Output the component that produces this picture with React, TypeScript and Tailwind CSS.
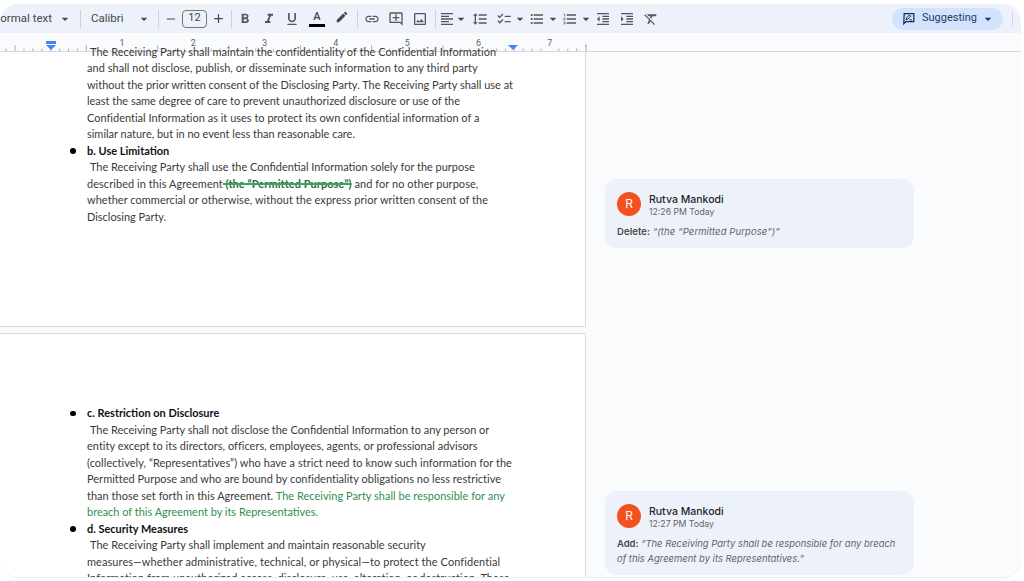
import React from 'react';
import {
  MdArrowDropDown,
  MdFormatBold,
  MdFormatItalic,
  MdFormatUnderlined,
  MdLink,
  MdOutlineAddComment,
  MdOutlineImage,
  MdFormatAlignLeft,
  MdFormatLineSpacing,
  MdChecklist,
  MdFormatListBulleted,
  MdFormatListNumbered,
  MdFormatIndentDecrease,
  MdFormatIndentIncrease,
  MdFormatClear,
  MdEdit,
  MdAdd,
  MdRemove,
} from 'react-icons/md';

const ICON = 'w-[16px] h-[16px] text-[#55585a]';

const Slot: React.FC<{ className: string; children?: React.ReactNode }> = ({ className, children }) => (
  <div className={`flex items-center justify-center shrink-0 h-full ${className}`}>{children}</div>
);

const Caret = () => <MdArrowDropDown className="w-[16px] h-[16px] text-[#444746] shrink-0" />;
const Sep = () => <div className="w-px h-[18px] bg-[#d0d3d6]" />;

const Toolbar = () => (
  <div className="flex items-center h-[29px] bg-[#edf2fa] font-['Roboto',sans-serif] text-[11.5px] text-[#444746] shrink-0">
    <Slot className="w-[58px] justify-end pr-[6px] overflow-hidden">
      <span className="whitespace-nowrap">Normal text</span>
    </Slot>
    <Slot className="w-[14px]"><Caret /></Slot>
    <Slot className="w-[16px]"><Sep /></Slot>
    <Slot className="w-[49px] justify-start pl-[3px]"><span>Calibri</span></Slot>
    <Slot className="w-[14px]"><Caret /></Slot>
    <Slot className="w-[14px]"><Sep /></Slot>
    <Slot className="w-[12px]"><MdRemove className="w-[14px] h-[14px] shrink-0" /></Slot>
    <Slot className="w-[25px] ml-[5px]">
      <div className="w-[25px] h-[18px] border border-[#747775] rounded-[4px] flex items-center justify-center text-[11px]">12</div>
    </Slot>
    <Slot className="w-[22px]"><MdAdd className="w-[15px] h-[15px]" /></Slot>
    <Slot className="w-[4px]"><Sep /></Slot>
    <Slot className="w-[24px]"><MdFormatBold className={ICON} /></Slot>
    <Slot className="w-[23px]"><MdFormatItalic className={ICON} /></Slot>
    <Slot className="w-[24px]"><MdFormatUnderlined className={ICON} /></Slot>
    <Slot className="w-[26px]">
      <div className="flex flex-col items-center">
        <span className="text-[11px] leading-[12px] font-medium">A</span>
        <div className="w-[16px] h-[3px] bg-black mt-[1px]" />
      </div>
    </Slot>
    <Slot className="w-[24px]"><MdEdit className="w-[14px] h-[14px] text-[#444746] -mt-[3px]" /></Slot>
    <Slot className="w-[6px]"><Sep /></Slot>
    <Slot className="w-[24px]"><MdLink className={ICON} /></Slot>
    <Slot className="w-[24px]"><MdOutlineAddComment className={ICON} /></Slot>
    <Slot className="w-[24px]"><MdOutlineImage className={ICON} /></Slot>
    <Slot className="w-[6px]"><Sep /></Slot>
    <Slot className="w-[18px]"><MdFormatAlignLeft className={ICON} /></Slot>
    <Slot className="w-[10px]"><Caret /></Slot>
    <Slot className="w-[28px]"><MdFormatLineSpacing className={ICON} /></Slot>
    <Slot className="w-[20px]"><MdChecklist className={ICON} /></Slot>
    <Slot className="w-[12px]"><Caret /></Slot>
    <Slot className="w-[22px]"><MdFormatListBulleted className={ICON} /></Slot>
    <Slot className="w-[10px]"><Caret /></Slot>
    <Slot className="w-[24px]"><MdFormatListNumbered className={ICON} /></Slot>
    <Slot className="w-[8px]"><Caret /></Slot>
    <Slot className="w-[25px]"><MdFormatIndentDecrease className={ICON} /></Slot>
    <Slot className="w-[24px]"><MdFormatIndentIncrease className={ICON} /></Slot>
    <Slot className="w-[24px]"><MdFormatClear className={ICON} /></Slot>
    <div className="ml-auto flex items-center h-[22px] w-[111px] rounded-full bg-[#d3e3fd] pl-[10px] text-[#1c3f66] shrink-0">
      <svg viewBox="0 0 16 14" className="w-[14px] h-[13px] shrink-0" fill="none" stroke="#0b2f57" strokeWidth="1.4">
        <path d="M2.5 1.5h11v9h-9l-2.5 2.5z" />
        <path d="M4.5 8.5l1-2.6 3-3 1.5 1.5-3 3zM8.5 8.6h3" strokeWidth="1.1" />
      </svg>
      <span className="ml-[6px] text-[11px]">Suggesting</span>
      <MdArrowDropDown className="w-[16px] h-[16px] ml-[3px] shrink-0" />
    </div>
    <Slot className="w-[18px]"><div className="w-px h-[16px] bg-[#d5d9de]" /></Slot>
  </div>
);

const INCHES = [1, 2, 3, 4, 5, 6, 7];
const TICKS = Array.from({ length: 66 }, (_, i) => i - 5);

const Ruler = () => (
  <div className="h-[19px] shrink-0 bg-[#f9fbfd]">
    <svg width="1021" height="19" viewBox="0 33 1021 19" className="block">
      <line x1="0" y1="51.5" x2="1021" y2="51.5" stroke="#d5d8dc" strokeWidth="1" />
      {TICKS.map((j) => {
        const x = 50.7 + j * 8.915;
        if (x > 586 || (j % 8 === 0 && j !== 0)) return null;
        const major = ((j - 4) % 8 + 8) % 8 === 0;
        return <line key={j} x1={x} x2={x} y1={major ? 45 : 48.5} y2="51" stroke="#8f9296" strokeWidth="0.7" />;
      })}
      <line x1="586" x2="586" y1="44" y2="52" stroke="#9aa0a6" strokeWidth="0.8" />
      {INCHES.map((n) => (
        <text key={n} x={50.7 + n * 71.3} y="46" textAnchor="middle" fontSize="9" fill="#5f6368" fontFamily="Roboto, sans-serif">
          {n}
        </text>
      ))}
      <rect x="46" y="41" width="10" height="3" fill="#4285f4" />
      <path d="M46 45h10l-5 5z" fill="#4285f4" />
      <path d="M508 45h10l-5 5z" fill="#4285f4" />
    </svg>
  </div>
);

const Line: React.FC<{ indent?: boolean; className?: string; children: React.ReactNode }> = ({ indent, className = '', children }) => (
  <div className={`h-[16.5px] leading-[16.5px] whitespace-nowrap ${indent ? 'pl-[3px]' : ''} ${className}`}>{children}</div>
);

const Heading: React.FC<{ children: React.ReactNode }> = ({ children }) => (
  <div className="relative h-[16.5px] leading-[16.5px] font-bold text-[#111] whitespace-nowrap">
    <span className="absolute left-[-17px] top-[5.5px] w-[5.5px] h-[5.5px] rounded-full bg-black" />
    {children}
  </div>
);

const DOC = "pl-[87px] font-['Lato',sans-serif] text-[10.96px] text-[#3a3a3a]";

const Doc = () => (
  <div className="w-[586px] shrink-0 flex flex-col">
    <div className={`h-[280px] overflow-hidden border-r border-b border-[#dadce0] bg-[linear-gradient(transparent_5px,white_5px)] ${DOC}`}>
      <div className="-mt-[3.5px]">
        <Line indent className="tracking-[0.02px]">The Receiving Party shall maintain the confidentiality of the Confidential Information</Line>
        <Line className="tracking-[0.06px]">and shall not disclose, publish, or disseminate such information to any third party</Line>
        <Line>without the prior written consent of the Disclosing Party. The Receiving Party shall use at</Line>
        <Line>least the same degree of care to prevent unauthorized disclosure or use of the</Line>
        <Line className="tracking-[0.02px]">Confidential Information as it uses to protect its own confidential information of a</Line>
        <Line>similar nature, but in no event less than reasonable care.</Line>
        <Heading>b. Use Limitation</Heading>
        <Line indent>The Receiving Party shall use the Confidential Information solely for the purpose</Line>
        <Line className="tracking-[0.07px]">
          described in this Agreement
          <span className="font-bold text-[#35624a] line-through decoration-[#34a853] decoration-[1.5px]"> (the “Permitted Purpose”)</span> and for no other purpose,
        </Line>
        <Line className="tracking-[0.06px]">whether commercial or otherwise, without the express prior written consent of the</Line>
        <Line>Disclosing Party.</Line>
      </div>
    </div>
    <div className="h-[6px] shrink-0" />
    <div className={`flex-1 min-h-0 overflow-hidden border-r border-t border-[#dadce0] bg-white pt-[71px] ${DOC}`}>
      <Heading>c. Restriction on Disclosure</Heading>
      <Line indent>The Receiving Party shall not disclose the Confidential Information to any person or</Line>
      <Line className="tracking-[0.035px]">entity except to its directors, officers, employees, agents, or professional advisors</Line>
      <Line className="tracking-[0.055px]">(collectively, “Representatives”) who have a strict need to know such information for the</Line>
      <Line className="tracking-[0.025px]">Permitted Purpose and who are bound by confidentiality obligations no less restrictive</Line>
      <Line className="tracking-[0.03px]">
        than those set forth in this Agreement. <span className="text-[#2f8f4e]">The Receiving Party shall be responsible for any</span>
      </Line>
      <Line><span className="text-[#2f8f4e]">breach of this Agreement by its Representatives.</span></Line>
      <Heading>d. Security Measures</Heading>
      <Line indent className="tracking-[0.04px]">The Receiving Party shall implement and maintain reasonable security</Line>
      <Line className="tracking-[0.09px]">measures—whether administrative, technical, or physical—to protect the Confidential</Line>
      <Line className="tracking-[0.09px]">Information from unauthorized access, disclosure, use, alteration, or destruction. These</Line>
    </div>
  </div>
);

const Card: React.FC<{ time: string; label: string; quote: string[]; className?: string }> = ({ time, label, quote, className = '' }) => (
  <div className="w-[309px] rounded-[12px] bg-[#edf2fa] px-[12px] pt-[13px] pb-[9.5px] font-['Inter',sans-serif]">
    <div className="flex items-center h-[24px]">
      <div className="w-[24px] h-[24px] rounded-full bg-[#f4511e] text-white text-[12px] flex items-center justify-center shrink-0">R</div>
      <div className="ml-[8px] mt-[4px]">
        <div className="text-[10.5px] leading-[12px] font-medium text-[#1f1f1f]">Rutva Mankodi</div>
        <div className="text-[8.7px] leading-[12px] text-[#5f6368]">{time}</div>
      </div>
    </div>
    <div className={`mt-[7.5px] text-[9.45px] leading-[15px] text-[#5f6368] ${className}`}>
      {quote.map((q, i) => (
        <div key={i} className="whitespace-nowrap">
          {i === 0 && <span className="font-semibold text-[#444746]">{label} </span>}
          <span className="italic">{q}</span>
        </div>
      ))}
    </div>
  </div>
);

const App = () => (
  <div className="w-[1024px] h-[581px] bg-white overflow-hidden pt-[4px]">
    <div className="w-[1021px] h-[574px] rounded-[18px] overflow-hidden bg-[#f9fbfd] flex flex-col border-b border-[#eceef1]">
      <Toolbar />
      <Ruler />
      <div className="flex flex-1 min-h-0 -mt-[5px] relative">
        <Doc />
        <div className="flex-1 pl-[19px] pt-[132px] flex flex-col gap-[243px]">
          <Card time="12:26 PM Today" label="Delete:" quote={['“(the “Permitted Purpose”)”']} className="tracking-[0.12px]" />
          <Card
            time="12:27 PM Today"
            label="Add:"
            quote={['“The Receiving Party shall be responsible for any breach', 'of this Agreement by its Representatives.”']}
          />
        </div>
      </div>
    </div>
  </div>
);

export default App;
